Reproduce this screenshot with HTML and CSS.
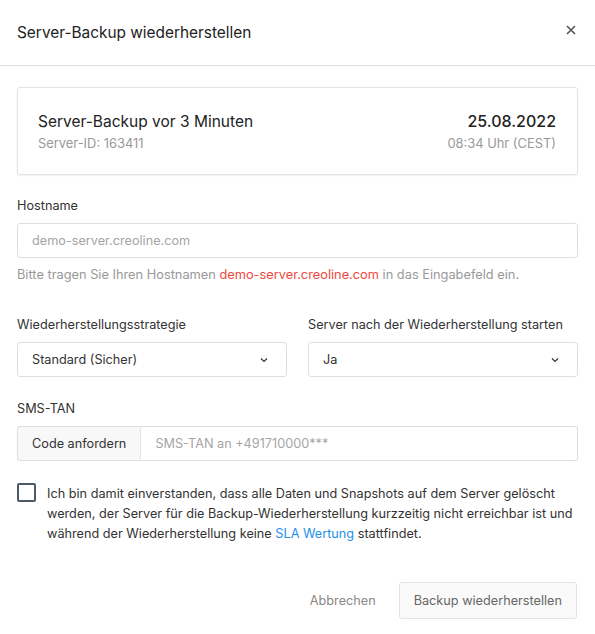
FILE: index.html
```html
<!DOCTYPE html>
<html>
<head>
  <meta charset="utf-8">
  <link rel="stylesheet" href="styles.css">
</head>
<body>
  <div class="modal">
    <div class="modal-header">
      <h2>Server-Backup wiederherstellen</h2>
      <svg class="close" width="10" height="10" viewBox="0 0 10 10"><path d="M1 1 L9 9 M9 1 L1 9" stroke="#555" stroke-width="1.6"/></svg>
    </div>
    <div class="modal-body">
      <div class="backup-card">
        <div>
          <div class="card-title">Server-Backup vor 3 Minuten</div>
          <div class="card-sub">Server-ID: 163411</div>
        </div>
        <div class="right">
          <div class="card-date">25.08.2022</div>
          <div class="card-sub">08:34 Uhr (CEST)</div>
        </div>
      </div>

      <div class="field">
        <label>Hostname</label>
        <div class="input placeholder">demo-server.creoline.com</div>
        <p class="help">Bitte tragen Sie Ihren Hostnamen <span class="red">demo-server.creoline.com</span> in das Eingabefeld ein.</p>
      </div>

      <div class="row">
        <div class="field">
          <label>Wiederherstellungsstrategie</label>
          <div class="input select">Standard (Sicher)
            <svg width="8" height="6" viewBox="0 0 8 6"><path d="M1 1.5 L4 4.5 L7 1.5" fill="none" stroke="#333" stroke-width="1.2"/></svg>
          </div>
        </div>
        <div class="field">
          <label>Server nach der Wiederherstellung starten</label>
          <div class="input select">Ja
            <svg width="8" height="6" viewBox="0 0 8 6"><path d="M1 1.5 L4 4.5 L7 1.5" fill="none" stroke="#333" stroke-width="1.2"/></svg>
          </div>
        </div>
      </div>

      <div class="field tan">
        <label>SMS-TAN</label>
        <div class="input-group">
          <div class="addon">Code anfordern</div>
          <div class="input placeholder">SMS-TAN an +491710000***</div>
        </div>
      </div>

      <div class="consent">
        <span class="checkbox"></span>
        <p>Ich bin damit einverstanden, dass alle Daten und Snapshots auf dem Server gelöscht werden, der Server für die Backup-Wiederherstellung kurzzeitig nicht erreichbar ist und während der Wiederherstellung keine <a href="#">SLA Wertung</a> stattfindet.</p>
      </div>
    </div>
    <div class="modal-footer">
      <span class="cancel">Abbrechen</span>
      <button class="btn">Backup wiederherstellen</button>
    </div>
  </div>
</body>
</html>
```

FILE: styles.css
```css
body {
  margin: 0;
  font-family: Inter, "Liberation Sans", sans-serif;
  color: #333;
  background: #fff;
}
.modal {
  width: 595px;
}
.modal-header {
  display: flex;
  justify-content: space-between;
  align-items: center;
  height: 66px;
  padding: 0 19px 0 17px;
  border-bottom: 1px solid #dedede;
  box-sizing: border-box;
}
.modal-header h2 {
  margin: 0;
  font-size: 15.4px;
  font-weight: 400;
  color: #222;
  margin-top: -1px;
}
.close {
  margin-top: -5px;
}
.modal-body {
  padding: 21px 17px 0;
}
.backup-card {
  display: flex;
  justify-content: space-between;
  align-items: center;
  height: 88px;
  padding: 0 21px 0 20px;
  border: 1px solid #e2e2e2;
  border-radius: 3px;
  box-shadow: 0 1px 2px rgba(0,0,0,0.06);
  box-sizing: border-box;
}
.right {
  text-align: right;
}
.card-title {
  font-size: 15.5px;
  color: #222;
}
.card-date {
  font-size: 16px;
  font-weight: 500;
  color: #222;
}
.card-sub {
  font-size: 12.9px;
  color: #999;
  margin-top: 5px;
}
.field {
  margin-top: 23px;
}
.field.tan {
  margin-top: 24px;
}
label {
  display: block;
  font-size: 12.7px;
  color: #333;
  margin-bottom: 10px;
}
.input {
  height: 35px;
  border: 1px solid #dedede;
  border-radius: 3px;
  box-sizing: border-box;
  display: flex;
  align-items: center;
  padding: 0 14px;
  font-size: 12.7px;
}
.placeholder {
  color: #a5a5a5;
}
.select {
  justify-content: space-between;
  color: #333;
  padding-right: 18px;
}
.help {
  margin: 9px 0 0;
  font-size: 12.8px;
  color: #999;
}
.red {
  color: #f0483e;
}
.row {
  display: grid;
  grid-template-columns: 1fr 1fr;
  gap: 21px;
  margin-top: 35px;
}
.row .field {
  margin-top: 0;
}
.input-group {
  display: flex;
}
.addon {
  height: 35px;
  box-sizing: border-box;
  padding: 0 14px;
  display: flex;
  align-items: center;
  font-size: 12.7px;
  background: #f8f8f8;
  border: 1px solid #dedede;
  border-right: 1px solid #e5e5e5;
  border-radius: 3px 0 0 3px;
}
.input-group .input {
  flex: 1;
  border-left: none;
  border-radius: 0 3px 3px 0;
}
.consent {
  display: flex;
  margin-top: 23px;
}
.checkbox {
  flex: none;
  width: 19px;
  height: 19px;
  border: 2px solid #4b5a66;
  border-radius: 2px;
  box-sizing: border-box;
  margin-top: -1px;
  margin-right: 11px;
}
.consent p {
  margin: 0;
  font-size: 12.7px;
  line-height: 20px;
  color: #333;
}
.consent a {
  color: #1e90e8;
  text-decoration: none;
}
.modal-footer {
  display: flex;
  justify-content: flex-end;
  align-items: center;
  gap: 23px;
  padding: 38px 18px 0;
}
.cancel {
  font-size: 12.7px;
  color: #888;
}
.btn {
  height: 37px;
  padding: 0 14px;
  font-family: inherit;
  font-size: 12.7px;
  color: #666;
  background: #fafafa;
  border: 1px solid #e3e3e3;
  border-radius: 3px;
}
```
